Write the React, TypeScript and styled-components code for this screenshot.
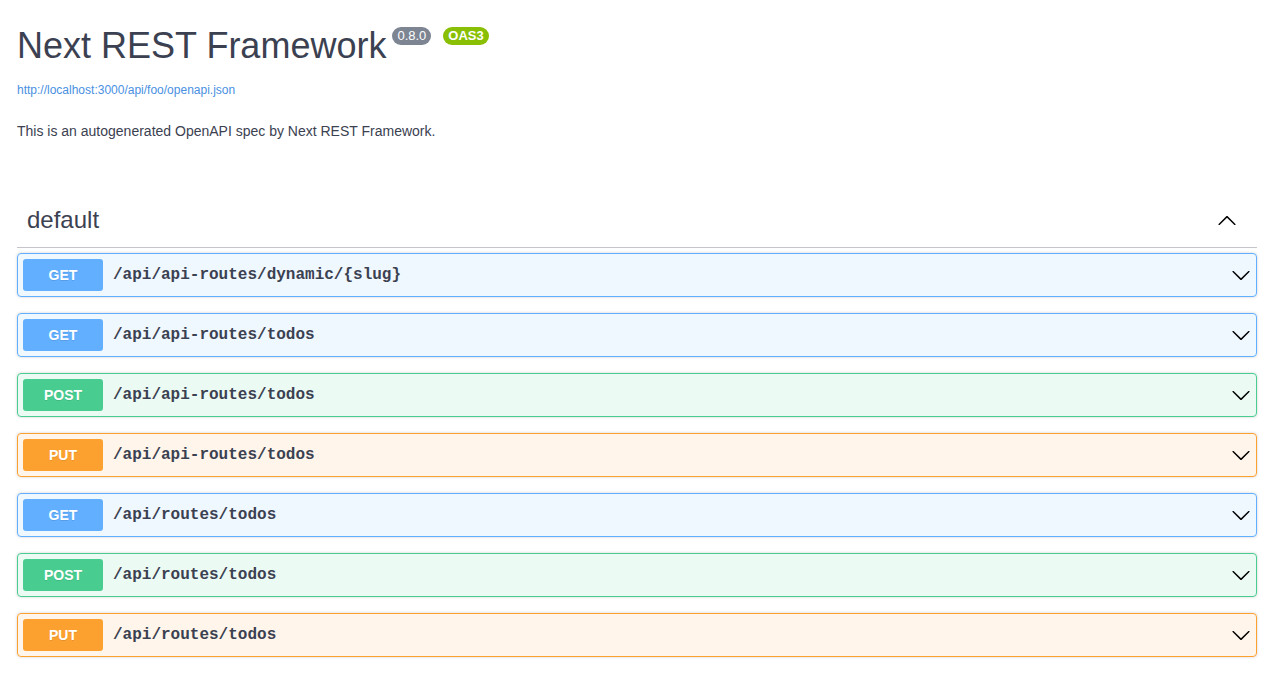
import React from "react";
import styled, { createGlobalStyle } from "styled-components";

const GlobalStyle = createGlobalStyle`
  html, body { margin: 0; padding: 0; background: #fff; }
  body { font-family: "Liberation Sans", Arial, sans-serif; color: #3b4151; }
  * { box-sizing: border-box; }
`;

const Wrapper = styled.div`
  width: 1276px;
  padding: 26px 19px 0 17px;
`;

const Info = styled.div`
  display: flex;
  flex-direction: column;
  align-items: flex-start;
`;

const Title = styled.h2`
  margin: 0;
  display: flex;
  align-items: flex-start;
  font-size: 36px;
  line-height: 40px;
  font-weight: 400;
  color: #3b4151;
`;

const Badge = styled.small<{ $bg: string; $ml: number; $bold?: boolean }>`
  display: inline-flex;
  align-items: center;
  justify-content: center;
  height: 18px;
  margin: 1px 0 0 ${(p) => p.$ml}px;
  padding: 0 5px;
  border-radius: 57px;
  background: ${(p) => p.$bg};
  color: #fff;
  font-size: 13px;
  line-height: 18px;
  font-weight: ${(p) => (p.$bold ? 700 : 400)};
`;

const SpecLink = styled.a`
  margin-top: 17px;
  font-size: 12px;
  line-height: 14px;
  color: #4990e2;
  text-decoration: none;
`;

const Description = styled.p`
  margin: 26px 0 0;
  font-size: 14px;
  line-height: 16px;
  color: #3b4151;
`;

const TagSection = styled.section`
  margin-top: 53px;
`;

const TagHeader = styled.h3`
  margin: 0 0 5px;
  height: 56px;
  padding: 10px 20px 10px 10px;
  display: flex;
  align-items: center;
  justify-content: space-between;
  border-bottom: 1px solid rgba(59, 65, 81, 0.3);
  font-size: 24px;
  font-weight: 400;
  color: #3b4151;
`;

const Arrow = styled.svg`
  width: 20px;
  height: 20px;
  flex: none;
  fill: #000;
`;

const methodColors: Record<string, { main: string; bg: string }> = {
  GET: { main: "#61affe", bg: "rgba(97,175,254,.1)" },
  POST: { main: "#49cc90", bg: "rgba(73,204,144,.1)" },
  PUT: { main: "#fca130", bg: "rgba(252,161,48,.1)" },
};

const OpBlock = styled.div<{ $method: string }>`
  margin: 0 0 16px;
  border: 1px solid ${(p) => methodColors[p.$method].main};
  background: ${(p) => methodColors[p.$method].bg};
  border-radius: 4px;
  box-shadow: 0 0 3px rgba(0, 0, 0, 0.19);
`;

const Summary = styled.div`
  display: flex;
  align-items: center;
  padding: 5px;
`;

const Method = styled.span<{ $method: string }>`
  min-width: 80px;
  padding: 6px 0;
  border-radius: 3px;
  background: ${(p) => methodColors[p.$method].main};
  color: #fff;
  text-align: center;
  font-size: 14px;
  line-height: 20px;
  font-weight: 700;
  text-shadow: 0 1px 0 rgba(0, 0, 0, 0.1);
`;

const Path = styled.span`
  flex: 1;
  padding: 0 10px;
  font-family: "Liberation Mono", "Courier New", monospace;
  font-size: 16px;
  font-weight: 700;
  color: #3b4151;
`;

const ops = [
  { method: "GET", path: "/api/api-routes/dynamic/{slug}" },
  { method: "GET", path: "/api/api-routes/todos" },
  { method: "POST", path: "/api/api-routes/todos" },
  { method: "PUT", path: "/api/api-routes/todos" },
  { method: "GET", path: "/api/routes/todos" },
  { method: "POST", path: "/api/routes/todos" },
  { method: "PUT", path: "/api/routes/todos" },
];

const ArrowDown = () => (
  <Arrow viewBox="0 0 20 20">
    <path d="M17.418 6.109c.272-.268.709-.268.979 0s.271.701 0 .969l-7.908 7.83c-.27.268-.707.268-.979 0l-7.908-7.83c-.27-.268-.27-.701 0-.969.271-.268.709-.268.979 0L10 13.25l7.418-7.141z" />
  </Arrow>
);

const ArrowUp = () => (
  <Arrow viewBox="0 0 20 20">
    <path d="M17.418 14.908c.272.268.709.268.979 0s.271-.701 0-.969l-7.908-7.83c-.27-.268-.707-.268-.979 0l-7.908 7.830c-.27.268-.27.701 0 .969.271.268.709.268.979 0L10 7.767l7.418 7.141z" />
  </Arrow>
);

export default function App() {
  return (
    <>
      <GlobalStyle />
      <Wrapper>
        <Info>
          <Title>
            Next REST Framework
            <Badge $bg="#7d8492" $ml={6}>0.8.0</Badge>
            <Badge $bg="#89bf04" $ml={12} $bold>OAS3</Badge>
          </Title>
          <SpecLink href="#">http://localhost:3000/api/foo/openapi.json</SpecLink>
          <Description>This is an autogenerated OpenAPI spec by Next REST Framework.</Description>
        </Info>
        <TagSection>
          <TagHeader>
            <span>default</span>
            <ArrowUp />
          </TagHeader>
          {ops.map((op, i) => (
            <OpBlock key={i} $method={op.method}>
              <Summary>
                <Method $method={op.method}>{op.method}</Method>
                <Path>{op.path}</Path>
                <ArrowDown />
              </Summary>
            </OpBlock>
          ))}
        </TagSection>
      </Wrapper>
    </>
  );
}
